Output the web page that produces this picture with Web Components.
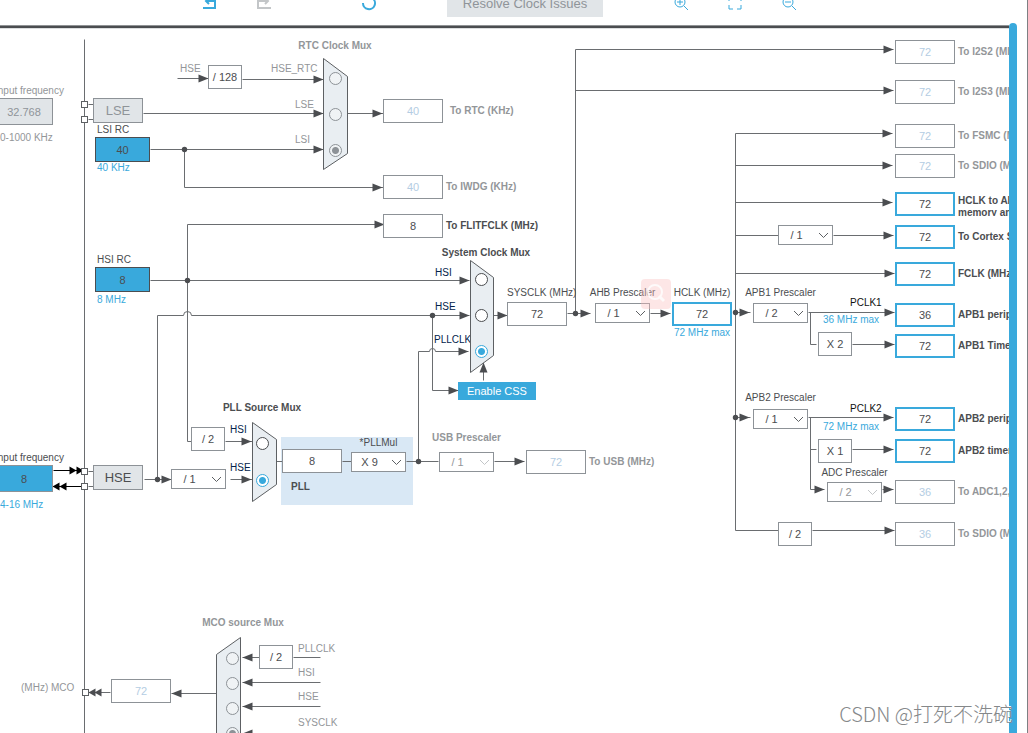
<!DOCTYPE html>
<html lang="en">
<head>
<meta charset="utf-8">
<title>Clock Configuration</title>
<style>
  html, body { margin: 0; height: 100%; }
  body { font: 10px/12px "Liberation Sans", Arial, sans-serif; color: #4b4d50; background: #fff; }
</style>
</head>
<body>
<clock-page>
  <clock-toolbar slot="toolbar"></clock-toolbar>
  <clock-canvas>
    <clock-panel x="281" y="437" w="132" h="68"></clock-panel>
    <clock-wires></clock-wires>

    <!-- low speed sources and RTC -->
    <clock-field x="-5" y="85" w="58" h="27" kind="muted" caption="Input frequency" gap="1" note="0-1000 KHz" note-gap="7" value="32.768" edge></clock-field>
    <clock-button x="93" y="98" w="50" h="25" kind="muted">LSE</clock-button>
    <clock-field x="95" y="124" w="55" h="25" kind="source" caption="LSI RC" gap="1" note="40 KHz" value="40" indent></clock-field>
    <clock-label x="180" y="63" tone="gray">HSE</clock-label>
    <clock-box x="208" y="65">/ 128</clock-box>
    <clock-label x="271" y="63" tone="gray">HSE_RTC</clock-label>
    <clock-label x="295" y="99" tone="gray">LSE</clock-label>
    <clock-label x="295" y="134" tone="gray">LSI</clock-label>
    <clock-label x="335" y="40" tone="gray" bold center>RTC Clock Mux</clock-label>
    <clock-mux x="323" y="58" name="RTC Clock Mux" shape="0,0 0,111 24,95 24,18" stops="HSE_RTC:20,LSE:56,LSI:92" selected="LSI" disabled></clock-mux>
    <clock-field x="383" y="99" kind="idle" side="right" caption="To RTC (KHz)" gap="7" value="40"></clock-field>
    <clock-field x="383" y="175" kind="idle" side="right" caption="To IWDG (KHz)" value="40"></clock-field>
    <clock-field x="383" y="214" side="right" caption="To FLITFCLK (MHz)" value="8"></clock-field>

    <!-- high speed sources and PLL -->
    <clock-field x="95" y="254" w="55" h="25" kind="source" caption="HSI RC" gap="1" note="8 MHz" note-gap="2" value="8" indent></clock-field>
    <clock-field x="-5" y="452" w="58" h="27" kind="active" caption="Input frequency" gap="1" note="4-16 MHz" note-gap="7" value="8" edge></clock-field>
    <clock-button x="93" y="465" w="50" h="25" kind="block">HSE</clock-button>
    <clock-label x="262" y="402" bold center>PLL Source Mux</clock-label>
    <clock-box x="191" y="427">/ 2</clock-box>
    <clock-select x="171" y="469" name="PLL source divider" value="/ 1"></clock-select>
    <clock-label x="230" y="424" tone="navy">HSI</clock-label>
    <clock-label x="230" y="462" tone="navy">HSE</clock-label>
    <clock-mux x="252" y="422" name="PLL Source Mux" shape="0,0 0,79 24,62 24,17" stops="HSI:21,HSE:58" radio-x="10" selected="HSE"></clock-mux>
    <clock-field x="282" y="449" name="PLL input" value="8"></clock-field>
    <clock-label x="291" y="481" bold>PLL</clock-label>
    <clock-select x="351" y="437" caption="*PLLMul" gap="3" value="X 9"></clock-select>
    <clock-select x="439" y="432" caption="USB Prescaler" gap="8" value="/ 1" disabled bold></clock-select>
    <clock-field x="526" y="450" kind="idle" side="right" caption="To USB (MHz)" value="72"></clock-field>

    <!-- system clock -->
    <clock-label x="486" y="247" bold center>System Clock Mux</clock-label>
    <clock-label x="435" y="267" tone="navy">HSI</clock-label>
    <clock-label x="435" y="301" tone="navy">HSE</clock-label>
    <clock-label x="434" y="334" tone="navy">PLLCLK</clock-label>
    <clock-mux x="470" y="260" name="System Clock Mux" shape="0,0 0,112 23,95 23,17" stops="HSI:19,HSE:55,PLLCLK:91" radio-x="11" selected="PLLCLK"></clock-mux>
    <clock-button x="458" y="382" w="78" h="18" kind="primary">Enable CSS</clock-button>
    <clock-field x="507" y="287" caption="SYSCLK (MHz)" gap="3" value="72"></clock-field>
    <clock-select x="595" y="287" caption="AHB Prescaler" gap="4" value="/ 1"></clock-select>
    <clock-field x="672" y="287" kind="output" caption="HCLK (MHz)" gap="3" note="72 MHz max" note-gap="1" value="72" center></clock-field>

    <!-- bus prescalers -->
    <clock-select x="778" y="225" name="Cortex prescaler" value="/ 1"></clock-select>
    <clock-select x="753" y="287" caption="APB1 Prescaler" gap="4" value="/ 2"></clock-select>
    <clock-label x="850" y="297" tone="black">PCLK1</clock-label>
    <clock-label x="851" y="314" tone="blue" center>36 MHz max</clock-label>
    <clock-box x="818" y="332">X 2</clock-box>
    <clock-select x="753" y="392" caption="APB2 Prescaler" gap="5" value="/ 1"></clock-select>
    <clock-label x="850" y="403" tone="black">PCLK2</clock-label>
    <clock-label x="851" y="421" tone="blue" center>72 MHz max</clock-label>
    <clock-box x="818" y="439">X 1</clock-box>
    <clock-select x="827" y="467" caption="ADC Prescaler" gap="3" value="/ 2" disabled dark-caption></clock-select>
    <clock-box x="778" y="522">/ 2</clock-box>

    <!-- outputs -->
    <clock-field x="895" y="40" kind="idle" side="right" caption="To I2S2 (MHz)" value="72"></clock-field>
    <clock-field x="895" y="80" kind="idle" side="right" caption="To I2S3 (MHz)" value="72"></clock-field>
    <clock-field x="895" y="124" kind="idle" side="right" caption="To FSMC (MHz)" value="72"></clock-field>
    <clock-field x="895" y="154" kind="idle" side="right" caption="To SDIO (MHz)" value="72"></clock-field>
    <clock-field x="895" y="192" kind="output" side="right" caption="HCLK to AHB memory and" value="72" wrap></clock-field>
    <clock-field x="895" y="225" kind="output" side="right" caption="To Cortex System" value="72"></clock-field>
    <clock-field x="895" y="262" kind="output" side="right" caption="FCLK (MHz)" value="72"></clock-field>
    <clock-field x="895" y="303" kind="output" side="right" caption="APB1 peripheral" value="36"></clock-field>
    <clock-field x="895" y="334" kind="output" side="right" caption="APB1 Timer" value="72"></clock-field>
    <clock-field x="895" y="407" kind="output" side="right" caption="APB2 peripheral" value="72"></clock-field>
    <clock-field x="895" y="439" kind="output" side="right" caption="APB2 timer" value="72"></clock-field>
    <clock-field x="895" y="480" kind="idle" side="right" caption="To ADC1,2,3" value="36"></clock-field>
    <clock-field x="895" y="522" kind="idle" side="right" caption="To SDIO (MHz)" value="36"></clock-field>

    <!-- MCO -->
    <clock-label x="21" y="682" tone="gray">(MHz) MCO</clock-label>
    <clock-field x="111" y="679" kind="idle" name="MCO" value="72"></clock-field>
    <clock-label x="243" y="617" tone="gray" bold center>MCO source Mux</clock-label>
    <clock-mux x="216" y="637" name="MCO source Mux" shape="24,0 0,17 0,125 24,142" stops="PLLCLK:21,HSI:46,HSE:71,SYSCLK:96" radio-x="16" selected="SYSCLK" disabled></clock-mux>
    <clock-box x="259" y="645">/ 2</clock-box>
    <clock-label x="298" y="643" tone="gray">PLLCLK</clock-label>
    <clock-label x="298" y="667" tone="gray">HSI</clock-label>
    <clock-label x="298" y="691" tone="gray">HSE</clock-label>
    <clock-label x="298" y="717" tone="gray">SYSCLK</clock-label>

    <clock-search x="641" y="279"></clock-search>
  </clock-canvas>
  <clock-credit slot="credit">CSDN @打死不洗碗</clock-credit>
</clock-page>

<script>
const define = (name, cls) => customElements.define(name, cls);

class ClockPage extends HTMLElement {
  constructor() {
    super();
    this.attachShadow({ mode: 'open' }).innerHTML = `
      <style>
        :host { display: flex; flex-direction: column; position: relative; height: 100vh; overflow: hidden;
                box-sizing: border-box; border-right: 1px solid #7d8083; }
        main { display: flex; flex: 1; min-height: 0; padding-right: 10px; }
        .view { display: flex; flex: 1; min-width: 0; }
        .bar { width: 8px; margin-top: -2px; background: #39a9dc; border-radius: 4px 4px 0 0; }
      </style>
      <slot name="toolbar"></slot>
      <main><div class="view"><slot></slot></div><div class="bar"></div></main>
      <slot name="credit"></slot>`;
  }
}

class ClockToolbar extends HTMLElement {
  constructor() {
    super();
    this.attachShadow({ mode: 'open' }).innerHTML = `
      <style>
        :host { display: flex; justify-content: center; align-items: flex-end; box-sizing: border-box;
                height: 25px; padding: 0 28px 8px 0; overflow: hidden; flex: none; color: #39a9dc; }
        div { display: flex; gap: 40px; }
        button { font: inherit; padding: 0; border: 0; background: none; color: inherit; display: block; }
        button:disabled { color: #c3c6c8; }
        svg { display: block; fill: none; stroke: currentColor; overflow: visible; }
        .refresh { margin-left: 91px; }
        .resolve { margin: 0 71px; width: 156px; height: 26px; background: #e1e5e8; font-size: 13px; }
        .resolve:disabled { color: #8f9499; }
      </style>
      <div>
        <button aria-label="Undo"><svg width="14" height="20"><path d="M0 11h12V4H3M6 1L3 4l3 3" stroke-width="2"/></svg></button>
        <button aria-label="Redo" disabled><svg width="14" height="20"><path d="M14 11H1V4h10M8 1l3 3-3 3" stroke-width="2"/></svg></button>
      </div>
      <button class="refresh" aria-label="Reset"><svg width="14" height="20"><path d="M1 6a6 6 0 1 0 9-5" stroke-width="2"/></svg></button>
      <button class="resolve" disabled>Resolve Clock Issues</button>
      <div>
        <button aria-label="Zoom in"><svg width="14" height="20"><circle cx="6" cy="5" r="5"/><path d="M6 2v6M3 5h6M10 9l4 4"/></svg></button>
        <button aria-label="Fit to window"><svg width="14" height="20"><path d="M1 4V0h4M9 0h4v4M13 8v4H9M5 12H1V8"/></svg></button>
        <button aria-label="Zoom out"><svg width="14" height="20"><circle cx="6" cy="5" r="5"/><path d="M3 5h6M10 9l4 4"/></svg></button>
      </div>`;
  }
}

/* The canvas is panned: --pan is the diagram row at its top edge. */
class ClockCanvas extends HTMLElement {
  constructor() {
    super();
    this.attachShadow({ mode: 'open' }).innerHTML = `
      <style>
        :host { display: block; flex: 1; min-width: 0; position: relative; overflow: hidden; background: #fff; --pan: 29px;
                border-top: 1px solid #909395; }
        .edge { height: 2px; background: #4b4d50; border-bottom: 1px solid #dcdedf; }
      </style>
      <div class="edge"></div>
      <slot></slot>`;
  }
}

/* Base of everything that has a place on the free canvas. */
class DiagramNode extends HTMLElement {
  connectedCallback() {
    if (this.shadowRoot) return;
    this.style.setProperty('--x', `${this.num('x', 0)}px`);
    this.style.setProperty('--y', `${this.num('y', 0)}px`);
    this.attachShadow({ mode: 'open' }).innerHTML = `
      <style>
        :host { display: block; position: absolute; left: var(--x); top: calc(var(--y) - var(--pan) + 3px); }
        * { box-sizing: border-box; }
      </style>${this.render()}`;
  }
  num(name, fallback) { return this.hasAttribute(name) ? Number(this.getAttribute(name)) : fallback; }
  str(name) { return this.getAttribute(name) || ''; }
}

define('clock-panel', class extends DiagramNode {
  render() {
    return `<style>:host { width: ${this.num('w')}px; height: ${this.num('h')}px; background: #d9e8f5; }</style>`;
  }
});

define('clock-label', class extends DiagramNode {
  render() {
    return `<style>
        :host { white-space: nowrap; color: #4b4d50; }
        :host([tone="gray"]) { color: #939699; }
        :host([tone="blue"]) { color: #39a9dc; }
        :host([tone="navy"]) { color: #03234b; }
        :host([tone="black"]) { color: #111; }
        :host([bold]) { font-weight: bold; }
        :host([center]) { transform: translateX(-50%); }
      </style><slot></slot>`;
  }
});

define('clock-box', class extends DiagramNode {
  render() {
    return `<style>
        :host { display: grid; place-items: center; box-sizing: border-box; width: 34px; height: 24px;
                border: 1px solid #8d9297; background: #fff; font-size: 11px; white-space: nowrap; }
      </style><slot></slot>`;
  }
});

define('clock-button', class extends DiagramNode {
  render() {
    return `<style>
        button { display: block; width: ${this.num('w')}px; height: ${this.num('h')}px; padding: 0; font: inherit; font-size: 13px;
                 color: #4b4d50; background: #e1e5e8; border: 1px solid #8d9297; }
        :host([kind="muted"]) button { color: #8f9499; }
        :host([kind="primary"]) button { color: #fff; background: #39a9dc; border-color: #39a9dc; font-size: 11px; }
      </style><button type="button"><slot></slot></button>`;
  }
});

define('clock-field', class extends DiagramNode {
  render() {
    const caption = this.str('caption'), note = this.str('note');
    return `<style>
        :host { display: flex; flex-direction: column; align-items: flex-start; white-space: nowrap; }
        :host([side="right"]) { flex-direction: row-reverse; align-items: center; }
        :host([center]) { align-items: center; width: ${this.num('w', 60)}px; }
        label { margin-bottom: ${this.num('gap', 3)}px; }
        :host([indent]) label, :host([indent]) .note { padding-left: 2px; }
        :host([edge]) .note { padding-left: 5px; }
        :host([side="right"]) label { margin: 0 0 0 ${this.num('gap', 3)}px; font-weight: bold; }
        :host([wrap]) label { width: 66px; height: 24px; padding-top: 3px; overflow: hidden; white-space: normal; }
        :host([kind="idle"]) label, :host([kind="muted"]) label { color: #939699; }
        input { flex: none; width: ${this.num('w', 60)}px; height: ${this.num('h', 24)}px; margin: 0; padding: 0; border: 1px solid #8d9297;
                border-radius: 0; background: #fff; font: inherit; font-size: 11px; text-align: center; color: #4b4d50; outline: 0; }
        :host([kind="idle"]) input { color: #b4cde3; }
        :host([kind="output"]) input { border: 2px solid #39a9dc; }
        :host([kind="muted"]) input { background: #e1e5e8; color: #8f9499; }
        :host([kind="source"]) input { background: #39a9dc; border-color: #4b4d50; }
        :host([kind="active"]) input { background: #39a9dc; }
        .note { margin-top: ${this.num('note-gap', 0)}px; color: #39a9dc; }
        :host([kind="muted"]) .note { color: #939699; }
      </style>
      ${caption ? `<label for="v">${caption}</label>` : ''}
      <input id="v" value="${this.str('value')}" ${caption ? '' : `aria-label="${this.str('name')}"`}>
      ${note ? `<div class="note">${note}</div>` : ''}`;
  }
});

define('clock-select', class extends DiagramNode {
  render() {
    const caption = this.str('caption');
    return `<style>
        :host { display: flex; flex-direction: column; align-items: center; width: 55px; white-space: nowrap; }
        label { margin-bottom: ${this.num('gap', 3)}px; }
        :host([bold]) label { font-weight: bold; }
        :host([disabled]) label { color: #939699; }
        :host([dark-caption]) label { color: #4b4d50; }
        .wrap { position: relative; }
        select { display: block; appearance: none; width: 55px; height: 20px; margin: 0; padding: 0 18px 0 0; border: 1px solid #8d9297;
                 border-radius: 0; background: #fff; font: inherit; font-size: 11px; text-align: center; text-align-last: center;
                 color: #4b4d50; opacity: 1; }
        :host([disabled]) select { color: #939699; }
        svg { position: absolute; right: 4px; top: 7px; fill: none; stroke: #5d6063; pointer-events: none; }
        :host([disabled]) svg { stroke: #c3c6c8; }
      </style>
      ${caption ? `<label for="s">${caption}</label>` : ''}
      <div class="wrap">
        <select id="s" ${caption ? '' : `aria-label="${this.str('name')}"`} ${this.hasAttribute('disabled') ? 'disabled' : ''}><option>${this.str('value')}</option></select>
        <svg width="11" height="7"><path d="M1 1l4.5 4.5L10 1"/></svg>
      </div>`;
  }
});

define('clock-mux', class extends DiagramNode {
  render() {
    const off = this.hasAttribute('disabled'), rx = this.num('radio-x', 12);
    const radios = this.str('stops').split(',').map(s => {
      const [name, y] = s.split(':');
      return `<input type="radio" name="mux" aria-label="${name}" style="left:${rx - 6}px;top:${y - 6}px"
        ${name === this.str('selected') ? 'checked' : ''} ${off ? 'disabled' : ''}>`;
    }).join('');
    return `<style>
        svg { display: block; overflow: visible; }
        polygon { fill: #e9eef2; stroke: #5d6063; stroke-width: 1; }
        input { position: absolute; appearance: none; width: 13px; height: 13px; margin: 0; border: 1px solid #4b4d50;
                border-radius: 50%; background: #fff; }
        input:checked { border-color: #39a9dc; background: radial-gradient(circle, #39a9dc 3px, #fff 4px); }
        input:disabled { border-color: #8d9297; background: #f0f3f5; }
        input:disabled:checked { background: radial-gradient(circle, #8d9297 3px, #f0f3f5 4px); }
      </style>
      <div role="radiogroup" aria-label="${this.str('name')}">
        <svg width="25" height="112"><polygon points="${this.str('shape')}" transform="translate(.5 .5)"/></svg>${radios}
      </div>`;
  }
});

define('clock-search', class extends DiagramNode {
  render() {
    return `<style>
        :host { width: 30px; height: 30px; border-radius: 4px; background: rgba(249, 190, 190, .38); }
        svg { display: block; fill: none; stroke: #fff; stroke-width: 2; opacity: .8; }
      </style><svg width="30" height="30"><circle cx="14" cy="13" r="7"/><path d="M18 17l5 5" stroke-width="3"/></svg>`;
  }
});

define('clock-wires', class extends DiagramNode {
  render() {
    const plain = [
      'M84 39V760', 'M88 104h5', 'M88 119h5', 'M88 471h5', 'M88 486h5',
      'M187 224V441H191', 'M157 479V315', 'M276 461H282', 'M342 461H351', 'M406 461H438',
      'M575 313V49', 'M735 133V530H778', 'M735 235H778', 'M810 312V344H816', 'M810 449H816', 'M293 657H320',
      'M177 78H208', 'M242 79H323', 'M143 113H323', 'M347 113H383', 'M150 149H323', 'M184 149V187H383',
      'M187 224H384', 'M150 280H469', 'M157 315H183a4 4 0 0 1 8 0H469', 'M432 315V390H458',
      'M418 461V351H429a3 3 0 0 1 6 0H468', 'M483 380V362', 'M493 315H508', 'M567 313H590', 'M650 313H670',
      'M575 49H893', 'M575 90H893', 'M735 133H892', 'M735 165H892', 'M735 202H892', 'M833 235H893',
      'M735 273H894', 'M735 312H750', 'M735 417H750', 'M812 530H894', 'M808 312H894', 'M852 344H894',
      'M808 417H893', 'M852 449H893', 'M810 417V489H824', 'M882 489H893', 'M494 461H524',
      'M225 441H252', 'M230 479H252', 'M144 479H171', 'M216 693H171', 'M259 657H242', 'M320 682H242',
      'M320 706H242', 'M320 733H242', 'M110 692H88'
    ];
    const inputs = ['M53 470H83', 'M81 486H53'];
    const right = [[208, 78], [323, 79], [323, 113], [382, 113], [323, 149], [382, 187], [384, 224], [469, 280],
      [469, 315], [458, 390], [468, 351], [507, 315], [590, 313], [670, 313], [893, 49], [893, 90], [892, 133],
      [892, 165], [892, 202], [893, 235], [894, 273], [749, 312], [749, 417], [894, 530], [894, 312], [894, 344],
      [893, 417], [893, 449], [824, 489], [893, 489], [524, 461], [251, 441], [251, 479], [171, 479]];
    const left = [[171, 693], [242, 657], [242, 682], [242, 706], [242, 733]];
    const pinHeads = ['M69 466l7 4-7 4z', 'M76 466l7 4-7 4z', 'M59 482l-7 4 7 4z', 'M66 482l-7 4 7 4z'];
    const outHeads = ['M95 688l-7 4 7 4z', 'M101 688l-7 4 7 4z', 'M479 372l4-10 4 10z'];
    const dots = [[184, 149], [187, 280], [157, 479], [432, 315], [418, 461], [575, 313], [735, 312], [735, 417]];
    const pins = [[84, 104], [84, 119], [84, 471], [84, 486], [85, 692]];
    const paths = (list, cls) => list.map(d => `<path class="${cls}" d="${d}"/>`).join('');
    return `<style>
        svg { display: block; }
        path { fill: none; stroke: #6a6d70; }
        .in { stroke: #000; }
        .head { fill: #4b4d50; stroke: none; }
        .black { fill: #000; stroke: none; }
        circle { fill: #4b4d50; }
        rect { fill: #fff; stroke: #5d6063; }
      </style>
      <svg width="1009" height="780" aria-hidden="true">
        <g transform="translate(.5 .5)">
          ${paths(plain, 'wire')}${paths(inputs, 'in')}
          ${paths(right.map(([x, y]) => `M${x - 10} ${y - 4}L${x} ${y}L${x - 10} ${y + 4}z`), 'head')}
          ${paths(left.map(([x, y]) => `M${x + 10} ${y - 4}L${x} ${y}L${x + 10} ${y + 4}z`), 'head')}
          ${paths(outHeads, 'head')}${paths(pinHeads, 'black')}
          ${dots.map(([x, y]) => `<circle cx="${x}" cy="${y}" r="2.7"/>`).join('')}
          ${pins.map(([x, y]) => `<rect x="${x - 3}" y="${y - 3}" width="6" height="6"/>`).join('')}
        </g>
      </svg>`;
  }
});

define('clock-credit', class extends HTMLElement {
  constructor() {
    super();
    this.attachShadow({ mode: 'open' }).innerHTML = `
      <style>
        :host { position: absolute; right: 14px; bottom: 4px; white-space: nowrap; color: #85888a;
                font: 300 20px/30px "Noto Sans CJK SC", sans-serif; text-shadow: -1px -1px 0 #fff; }
      </style><slot></slot>`;
  }
});

define('clock-toolbar', ClockToolbar);
define('clock-canvas', ClockCanvas);
define('clock-page', ClockPage);
</script>
</body>
</html>
